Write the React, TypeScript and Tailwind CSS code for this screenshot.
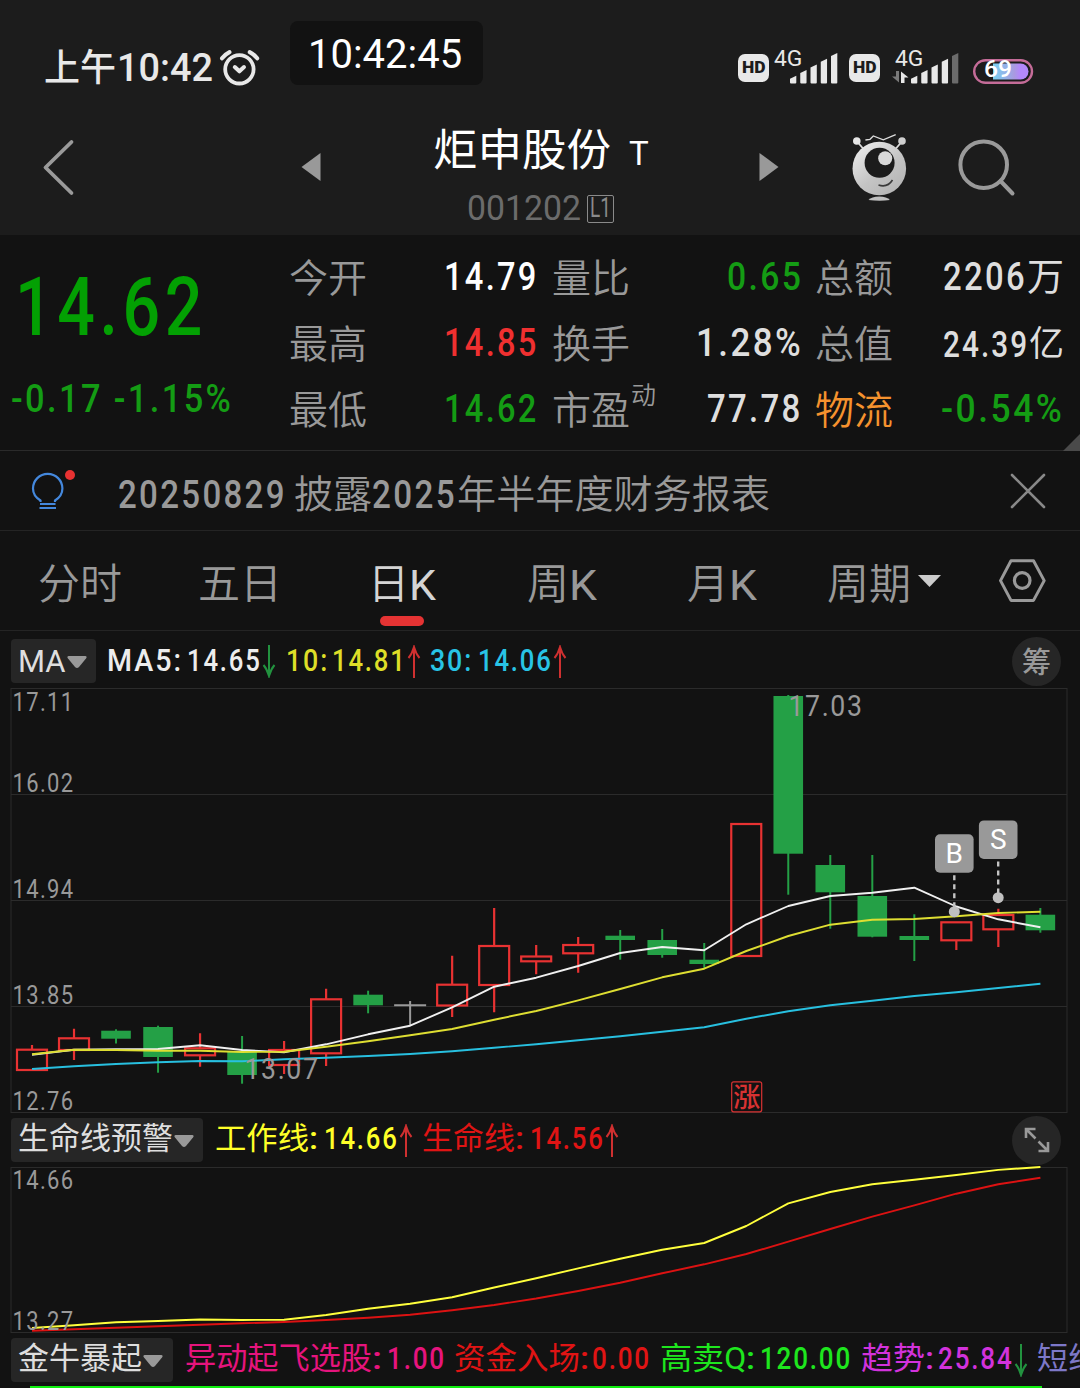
import React, { useLayoutEffect, useRef } from "react";
import clsx from "clsx";

type Candle = {
  kind: "up" | "down" | "flat";
  top: number;
  bottom: number;
  high: number;
  low: number;
};

const STEP = 42.015;
const xAt = (i: number) => 32 + STEP * i;

const candles: Candle[] = [
  { kind: "up", top: 1049.7, bottom: 1070, high: 1045, low: 1070 },
  { kind: "up", top: 1038.3, bottom: 1050, high: 1028.7, low: 1060 },
  { kind: "down", top: 1030.7, bottom: 1038.7, high: 1029.3, low: 1043.5 },
  { kind: "down", top: 1027, bottom: 1057, high: 1025.7, low: 1072.7 },
  { kind: "up", top: 1048.3, bottom: 1055.3, high: 1033.3, low: 1066.7 },
  { kind: "down", top: 1052, bottom: 1075, high: 1036, low: 1083.7 },
  { kind: "up", top: 1050, bottom: 1065, high: 1041, low: 1074 },
  { kind: "up", top: 999.3, bottom: 1053.3, high: 988.7, low: 1066 },
  { kind: "down", top: 994.7, bottom: 1005.3, high: 990.7, low: 1013.3 },
  { kind: "flat", top: 1005.3, bottom: 1005.3, high: 1001, low: 1025 },
  { kind: "up", top: 984.7, bottom: 1005.5, high: 955.7, low: 1017 },
  { kind: "up", top: 946, bottom: 985, high: 908, low: 1012.3 },
  { kind: "up", top: 956.5, bottom: 961.3, high: 945, low: 974.3 },
  { kind: "up", top: 945, bottom: 953.3, high: 937, low: 972.7 },
  { kind: "down", top: 935.7, bottom: 940, high: 930, low: 959.7 },
  { kind: "down", top: 940, bottom: 955, high: 929, low: 957.7 },
  { kind: "down", top: 959.7, bottom: 964, high: 943, low: 968 },
  { kind: "up", top: 824, bottom: 956, high: 824, low: 956 },
  { kind: "down", top: 696, bottom: 853.7, high: 695, low: 894.7 },
  { kind: "down", top: 865, bottom: 892.3, high: 855, low: 928.7 },
  { kind: "down", top: 896, bottom: 936.7, high: 855, low: 937.3 },
  { kind: "down", top: 936, bottom: 940, high: 914.3, low: 961 },
  { kind: "up", top: 922.3, bottom: 940.3, high: 922.3, low: 950 },
  { kind: "up", top: 915, bottom: 929.3, high: 908.7, low: 947 },
  { kind: "down", top: 914.7, bottom: 930.3, high: 908, low: 932.7 },
];

const ma5 = [
  1054.7, 1049.7, 1049.3, 1049, 1045.3, 1050, 1052.3, 1044.3, 1034.3, 1025.7,
  1007.3, 986.7, 977.7, 966, 953, 947, 950.3, 924.3, 906, 896, 892.7, 887.7,
  906.5, 919.3, 927.3,
];
const ma10 = [
  1054.3, 1049.7, 1050, 1050.7, 1050.7, 1052, 1051.7, 1046.7, 1041.3, 1035.3,
  1029, 1019.7, 1011, 1000.3, 989, 977.3, 968.7, 951, 936, 924.7, 919.7, 919,
  916.3, 913, 911.7,
];
const ma30 = [
  1069, 1066.3, 1064, 1062.3, 1061, 1061.3, 1059.3, 1057.7, 1056, 1054, 1051.3,
  1047.7, 1044.3, 1040.3, 1036.3, 1031.7, 1027.3, 1018.7, 1011.3, 1005.3,
  1000.7, 996, 992.3, 988, 983.7,
];
const workLine = [
  1328, 1325.3, 1322.3, 1321, 1319.5, 1320, 1319.7, 1315, 1308.7, 1303.7,
  1297.3, 1287.5, 1278.3, 1268.3, 1258.7, 1249.7, 1243, 1226, 1203.3, 1192,
  1184.3, 1179.7, 1175, 1169.9, 1167,
];
const lifeLine = [
  1330.7, 1329.3, 1327.7, 1326.3, 1324.7, 1323.3, 1322, 1320, 1317.7, 1314.7,
  1310.3, 1305, 1298.5, 1291, 1282.7, 1273.3, 1264.3, 1254, 1241.7, 1229,
  1216.7, 1205.3, 1193.7, 1184.3, 1177.7,
];

const toPoints = (ys: number[]) =>
  ys.map((y, i) => `${xAt(i).toFixed(1)},${y}`).join(" ");

// Squeezes its text horizontally to the width of the box
const Fit = ({
  className,
  children,
}: {
  className?: string;
  children: React.ReactNode;
}) => {
  const outer = useRef<HTMLSpanElement>(null);
  const inner = useRef<HTMLSpanElement>(null);

  useLayoutEffect(() => {
    if (!outer.current || !inner.current) return;
    const scale = outer.current.clientWidth / inner.current.offsetWidth;
    inner.current.style.transform = `scaleX(${scale})`;
  }, [children]);

  return (
    <span ref={outer} className={clsx("block shrink-0 leading-none", className)}>
      <span ref={inner} className="inline-block origin-left whitespace-nowrap">
        {children}
      </span>
    </span>
  );
};

// Narrow, widely set digits used for all prices
const Num = ({ className, children }: { className?: string; children: React.ReactNode }) => (
  <Fit className={clsx("tracking-[0.07em]", className)}>{children}</Fit>
);

const HdBadge = ({ className }: { className?: string }) => (
  <span
    className={clsx(
      "mt-[54px] flex h-7 w-[31px] shrink-0 items-center justify-center rounded-[7px] bg-[#e8e8e8] text-[16px] font-black text-[#1c1c1c]",
      className
    )}
  >
    <Fit className="w-[24px]">HD</Fit>
  </span>
);

const SignalBars = ({ dim }: { dim?: boolean }) => (
  <svg viewBox="0 0 48 34" className="h-[34px] w-12">
    {[0, 1, 2, 3, 4].map((i) => {
      const x = i * 10.25;
      const top = 25.8 - i * 5.7;
      return (
        <path
          key={i}
          d={`M${x} ${top + 3}L${x + 6.3} ${top}V32.5q0 1 -1 1H${x + 1}q-1 0 -1 -1Z`}
          fill={dim && i === 4 ? "#6b6b6b" : "#e8e8e8"}
        />
      );
    })}
  </svg>
);

const StatusBar = () => (
  <div className="flex h-[105px] items-start text-[#e8e8e8]">
    <Fit className="mt-[50px] ml-[44px] w-[72px] text-[37px] font-medium">上午</Fit>
    <Fit className="mt-[49px] ml-[1px] w-[96px] text-[39px] font-medium">10:42</Fit>
    <svg
      viewBox="219 48 41 40"
      className="mt-12 ml-[6px] h-10 w-[41px]"
      fill="none"
      stroke="#e8e8e8"
      strokeLinecap="round"
      strokeLinejoin="round"
    >
      <circle cx="239.4" cy="69.3" r="14.2" strokeWidth="3.8" />
      <path d="M234.8 67l4.6 4.3 4.6-4.3" strokeWidth="4" />
      <path d="M222 58.3q3-4 7.5-6.2M249.7 52.1q4.5 2.2 7.5 6.2" strokeWidth="4" />
    </svg>
    <div className="mt-[21px] ml-[30px] flex h-16 w-[193px] items-center justify-center rounded-lg bg-[#121212] pt-0.5 pr-1 text-[41px] text-white">
      <Fit className="w-[154px]">10:42:45</Fit>
    </div>
    <HdBadge className="ml-[255px]" />
    <div className="mt-[48px] ml-[5px] h-[37px] w-[64px]">
      <Fit className="w-[28px] text-[22px]">4G</Fit>
      <div className="-mt-[20px] ml-[15.5px]">
        <SignalBars />
      </div>
    </div>
    <HdBadge className="ml-[11px]" />
    <div className="mt-[48px] ml-[12px] h-[37px] w-[68px]">
      <Fit className="ml-[3px] w-[28px] text-[22px]">4G</Fit>
      <div className="-mt-[20px] flex w-[68px] items-end">
        <svg viewBox="891 72 17 12" className="mb-[1px] h-3 w-[17px] shrink-0">
          <path d="M898 72V83.5L891 77.500H895V72Z" fill="#7a7a7a" />
          <path d="M900 84V72.500L907.500 78.500H903.500V84Z" fill="#e8e8e8" />
        </svg>
        <div className="ml-[2px] w-12 shrink-0">
          <SignalBars dim />
        </div>
      </div>
    </div>
    <svg
      viewBox="972 58 62 27"
      className="mt-[58px] ml-[12px] h-[27px] w-[62px] shrink-0 overflow-visible"
    >
      <defs>
        <linearGradient id="charge" x1="0" x2="1" y1="0" y2="0">
          <stop offset="0" stopColor="#78d2f2" />
          <stop offset="0.6" stopColor="#a99ae0" />
          <stop offset="0.75" stopColor="#b388fa" />
          <stop offset="1" stopColor="#b388fa" />
        </linearGradient>
      </defs>
      <rect x="974.2" y="60.2" width="57.8" height="22.6" rx="11.3" fill="none" stroke="#c46c98" strokeWidth="2.4" />
      <path d="M993 63.500H1020.500a8 8 0 0 1 0 16H993Z" fill="url(#charge)" />
      <text x="984" y="77" textLength="28" lengthAdjust="spacingAndGlyphs" fontSize="24" fontWeight="500" fill="#fff">
        69
      </text>
    </svg>
  </div>
);

const TitleBar = () => (
  <div className="flex h-[130px] items-start">
    <svg
      viewBox="42 139 34 58"
      className="mt-[34px] ml-[42px] h-[58px] w-[34px]"
      fill="none"
      stroke="#9a9a9a"
      strokeWidth="3.8"
      strokeLinecap="round"
      strokeLinejoin="round"
    >
      <path d="M71.500 142L45.500 167.500L71.500 193" />
    </svg>
    <svg viewBox="0 0 20 28" className="mt-[48px] ml-[225px] h-7 w-5" fill="#999">
      <path d="M.5 14L19.500 0V28Z" />
    </svg>
    <div className="ml-[112px] w-[216px]">
      <div className="mt-[24px] flex items-center text-white">
        <Fit className="w-[178px] text-[44px]">炬申股份</Fit>
        <Fit className="mt-[5px] ml-[18px] w-[20px] text-[33px]">T</Fit>
      </div>
      <div className="mt-[18px] ml-[34px] flex items-center text-[#6b6b6b]">
        <Fit className="w-[114px] text-[35px]">001202</Fit>
        <span className="ml-[6px] flex h-7 w-[27px] items-center justify-center rounded-[2px] border border-[#8a8a8a] text-[27px] text-[#8a8a8a]">
          <Fit className="w-[21px]">L1</Fit>
        </span>
      </div>
    </div>
    <svg viewBox="0 0 20 28" className="mt-[48px] ml-[110px] h-7 w-5" fill="#999">
      <path d="M19.500 14L.5 0V28Z" />
    </svg>
    <svg viewBox="850 132 60 72" className="mt-[27px] ml-[71px] h-[72px] w-[60px]">
      <defs>
        <linearGradient id="robot" x1="0" x2="0.8" y1="0" y2="1">
          <stop offset="0" stopColor="#f2f2f2" />
          <stop offset="0.6" stopColor="#c4c4c4" />
          <stop offset="1" stopColor="#b4b4b4" />
        </linearGradient>
      </defs>
      <g stroke="#dcdcdc" fill="none" strokeWidth="1.8">
        <path d="M857.500 142L863.500 149M901.500 142L895.500 149" />
        <path d="M865.400 140L870 139.300L873.300 136L883.300 139.900L895.700 134.700" strokeWidth="1.3" />
      </g>
      <circle cx="856.8" cy="141" r="3.8" fill="#e6e6e6" />
      <circle cx="902" cy="141" r="3.8" fill="#cfcfcf" />
      <circle cx="879.3" cy="168.5" r="26.8" fill="url(#robot)" />
      <circle cx="879.6" cy="162.8" r="15" fill="#1c1c1c" />
      <circle cx="885.2" cy="158.3" r="7" fill="#d8d8d8" />
      <path d="M878.500 185q9 3 14-5" fill="none" stroke="#3a3a3a" strokeWidth="1.6" />
      <path d="M868.500 200q3-3.600 10.700-3.600t10.700 3.600q-10 1.600-21.400 0" fill="#c0c0c0" />
    </svg>
    <svg
      viewBox="956 137 60 60"
      className="mt-8 ml-[46px] h-[60px] w-[60px]"
      fill="none"
      stroke="#9a9a9a"
      strokeWidth="4"
      strokeLinecap="round"
    >
      <circle cx="983.7" cy="164.7" r="23.3" />
      <path d="M1000.500 181L1012.500 193.500" />
    </svg>
  </div>
);

const quoteLabel = "flex h-[66px] items-center text-[39px] font-[350] text-[#999]";
const quoteValue = "flex h-[66px] items-center justify-end pb-1 text-[39.5px] font-medium";

const Quote = () => (
  <div className="relative flex h-[216px] border-b border-[#2a2a2a]">
    <div className="w-[289px] shrink-0 font-medium">
      <Num className="mt-[32px] ml-[15px] w-[192px] text-[81px] text-[#03a003]">14.62</Num>
      <Num className="mt-[32px] ml-[11px] w-[222px] text-[39px] text-[#149c14]">
        -0.17 -1.15%
      </Num>
    </div>
    <div className="mt-[11px] w-[78px] shrink-0">
      <div className={quoteLabel}>今开</div>
      <div className={quoteLabel}>最高</div>
      <div className={quoteLabel}>最低</div>
    </div>
    <div className="mt-[11px] w-[172px] shrink-0">
      <div className={clsx(quoteValue, "text-white")}>
        <Num className="w-[95px]">14.79</Num>
      </div>
      <div className={clsx(quoteValue, "text-[#f03030]")}>
        <Num className="w-[95px]">14.85</Num>
      </div>
      <div className={clsx(quoteValue, "text-[#149c14]")}>
        <Num className="w-[95px]">14.62</Num>
      </div>
    </div>
    <div className="mt-[11px] ml-[13px] w-[105px] shrink-0">
      <div className={quoteLabel}>量比</div>
      <div className={quoteLabel}>换手</div>
      <div className={quoteLabel}>
        市盈
        <span className="mb-[30px] ml-px text-[25px]">动</span>
      </div>
    </div>
    <div className="mt-[11px] w-[146px] shrink-0">
      <div className={clsx(quoteValue, "text-[#149c14]")}>
        <Num className="w-[76px]">0.65</Num>
      </div>
      <div className={clsx(quoteValue, "text-[#dedede]")}>
        <Num className="w-[107px]">1.28%</Num>
      </div>
      <div className={clsx(quoteValue, "text-[#dedede]")}>
        <Num className="w-[96px]">77.78</Num>
      </div>
    </div>
    <div className="mt-[11px] ml-[12px] w-[78px] shrink-0">
      <div className={quoteLabel}>总额</div>
      <div className={quoteLabel}>总值</div>
      <div className="flex h-[66px] items-center text-[39px] font-[350] text-[#f5922e]">物流</div>
    </div>
    <div className="mt-[11px] w-[171px] shrink-0">
      <div className={clsx(quoteValue, "text-[#dedede]")}>
        <Num className="w-[84px]">2206</Num>
        <Fit className="w-[37px] text-[38px] font-normal">万</Fit>
      </div>
      <div className="flex h-[66px] items-center justify-end pb-0.5 text-[37px] font-medium text-[#dedede]">
        <Num className="w-[86px]">24.39</Num>
        <Fit className="w-[35px] text-[35px] font-normal">亿</Fit>
      </div>
      <div className={clsx(quoteValue, "text-[#149c14]")}>
        <Num className="w-[123px]">-0.54%</Num>
      </div>
    </div>
    <svg viewBox="0 0 17 17" className="absolute right-0 -bottom-px h-[17px] w-[17px]" fill="#4a4a4a">
      <path d="M17 0V17H0Z" />
    </svg>
  </div>
);

const News = () => (
  <div className="flex h-20 items-center border-b border-[#242424] text-[#999]">
    <svg
      viewBox="30 468 48 44"
      className="mb-0.5 ml-[30px] h-11 w-12"
      fill="none"
      stroke="#4488dd"
      strokeWidth="2.2"
    >
      <path d="M40.500 502V500.500Q33 496 33 488.500A14.700 14.700 0 0 1 62.400 488.500Q62.400 496 55 500.500V502M39.500 508H56M40 504H55.500" />
      <circle cx="70" cy="475" r="5" fill="#e83232" stroke="none" />
    </svg>
    <div className="mt-2 ml-[40px] flex items-center text-[39px]">
      <Num className="w-[169px] text-[39.5px] font-medium">20250829</Num>
      <Fit className="mt-0.5 ml-[7px] w-[78px] font-[350]">披露</Fit>
      <Num className="w-[85px] text-[39.5px] font-medium">2025</Num>
      <Fit className="mt-0.5 w-[313px] font-[350]">年半年度财务报表</Fit>
    </div>
    <svg
      viewBox="0 0 36 36"
      className="ml-[240px] h-9 w-9"
      stroke="#888"
      strokeWidth="2.6"
      strokeLinecap="round"
    >
      <path d="M2 2L34 34M34 2L2 34" />
    </svg>
  </div>
);

const Tabs = () => (
  <div className="flex h-[100px] items-start border-b border-[#242424] pt-[33px] text-[42px] font-[350] text-[#999]">
    <Fit className="ml-[38px] w-[84px]">分时</Fit>
    <Fit className="ml-[76px] w-[84px]">五日</Fit>
    <div className="ml-[86px] w-[72px] text-[#d4d4d4]">
      <div className="flex">
        <Fit className="w-[41px]">日</Fit>
        <Fit className="w-[27px] text-[43px] font-normal">K</Fit>
      </div>
      <div className="mt-[9px] ml-[12px] h-[10px] w-[44px] rounded-full bg-[#e53333]" />
    </div>
    <div className="ml-[87px] flex w-[71px]">
      <Fit className="w-[42px]">周</Fit>
      <Fit className="w-[28px] text-[43px] font-normal">K</Fit>
    </div>
    <div className="ml-[89px] flex w-[71px]">
      <Fit className="w-[42px]">月</Fit>
      <Fit className="w-[28px] text-[43px] font-normal">K</Fit>
    </div>
    <Fit className="ml-[69px] w-[84px]">周期</Fit>
    <svg viewBox="0 0 23 12" className="mt-[11px] ml-[7px] h-3 w-[23px]" fill="#ccc">
      <path d="M0 0H23L11.500 12Z" />
    </svg>
    <svg
      viewBox="998 557 50 48"
      className="-mt-[7px] ml-[57px] h-12 w-[50px]"
      fill="none"
      stroke="#999"
      strokeWidth="3"
      strokeLinejoin="round"
    >
      <path d="M1011 560.800H1033.500L1044.200 580.600L1033.500 600.400H1011L1000.500 580.600Z" />
      <circle cx="1022.2" cy="580.5" r="7.8" strokeWidth="3.2" />
    </svg>
  </div>
);

const Picker = ({ className, children }: { className?: string; children: React.ReactNode }) => (
  <div
    className={clsx(
      "flex h-11 shrink-0 items-center rounded bg-[#262626] pl-[7px] text-[31px] text-[#dedede]",
      className
    )}
  >
    {children}
    <svg viewBox="0 0 20 12" className="mt-0.5 ml-[1px] h-3 w-5" fill="#999">
      <path d="M1.500 0H18.500Q20.500 0.500 19 2.500L12 11Q10 12.800 8 11L1 2.500Q-.5 .5 1.500 0Z" />
    </svg>
  </div>
);

const Trend = ({ down }: { down?: boolean }) => (
  <svg
    viewBox="0 0 14 33"
    className={clsx("h-[33px] w-[14px] shrink-0", down && "rotate-180")}
    fill="none"
    stroke={down ? "#22923f" : "#cf3030"}
    strokeWidth="2"
  >
    <path d="M7 33V2M1.500 13Q5 9 7 2Q9 9 12.500 13" />
  </svg>
);

const RoundButton = ({ children }: { children: React.ReactNode }) => (
  <div className="mr-[19px] ml-auto flex size-[49px] items-center justify-center rounded-full bg-[#262626] text-[29px] leading-none text-[#999]">
    {children}
  </div>
);

const MaBar = () => (
  <div className="flex h-[57px] items-center pt-[3px] text-[30.5px] font-medium">
    <Picker className="ml-[11px] w-[85px]">
      <Fit className="w-[48px] text-[31px] font-normal">MA</Fit>
    </Picker>
    <Num className="ml-[11px] w-[76px] text-[#ededed]">MA5:</Num>
    <Num className="ml-[4px] w-[75px] text-[#ededed]">14.65</Num>
    <Trend down />
    <Num className="ml-[10px] w-[43px] text-[#dede28]">10:</Num>
    <Num className="ml-[3px] w-[75px] text-[#dede28]">14.81</Num>
    <Trend />
    <Num className="ml-[9px] w-[43px] text-[#28c4e6]">30:</Num>
    <Num className="ml-[5px] w-[75px] text-[#28c4e6]">14.06</Num>
    <Trend />
    <RoundButton>
      <span className="mt-1">筹</span>
    </RoundButton>
  </div>
);

const LifeBar = () => (
  <div className="flex h-[54px] items-center text-[30.5px] font-medium">
    <Picker className="ml-[11px] w-[192px]">
      <Fit className="mb-1 w-[155px] font-normal">生命线预警</Fit>
    </Picker>
    <Fit className="mb-1 ml-[12px] w-[94px] text-[31px] font-normal text-[#ffff28]">工作线</Fit>
    <Fit className="mb-0.5 w-[9px] text-[#ffff28]">:</Fit>
    <Num className="mb-0.5 ml-[6px] w-[75px] text-[#ffff28]">14.66</Num>
    <Trend />
    <Fit className="mb-1 ml-[9px] w-[93px] text-[31px] font-normal text-[#e01414]">生命线</Fit>
    <Fit className="mb-0.5 w-[9px] text-[#e01414]">:</Fit>
    <Num className="mb-0.5 ml-[6px] w-[75px] text-[#e01414]">14.56</Num>
    <Trend />
    <RoundButton>
      <svg
        viewBox="0 0 26 26"
        className="h-[26px] w-[26px]"
        fill="none"
        stroke="#999"
        strokeWidth="2.6"
      >
        <path d="M2 11V2H11.500M2.500 2.500L11.500 11.500M24 15V24H14.500M23.500 23.500L14.500 14.500" />
      </svg>
    </RoundButton>
  </div>
);

const BullBar = () => (
  <div className="flex h-[52px] w-[1080px] items-center overflow-hidden text-[30.5px] font-medium">
    <Picker className="ml-[11px] w-[162px]">
      <Fit className="mb-1 w-[124px] font-normal">金牛暴起</Fit>
    </Picker>
    <Fit className="mb-1 ml-[12px] w-[187px] text-[31px] font-normal text-[#e6147d]">异动起飞选股</Fit>
    <Fit className="mb-0.5 w-[10px] text-[#e6147d]">:</Fit>
    <Num className="mb-0.5 ml-[5px] w-[59px] text-[#e6147d]">1.00</Num>
    <Fit className="mb-1 ml-[8px] w-[126px] text-[31px] font-normal text-[#e01414]">资金入场</Fit>
    <Fit className="mb-0.5 w-[9px] text-[#e01414]">:</Fit>
    <Num className="mb-0.5 ml-[3px] w-[59px] text-[#e01414]">0.00</Num>
    <Fit className="mb-1 ml-[9px] w-[86px] text-[31px] font-normal text-[#1ee61e]">高卖Q</Fit>
    <Fit className="mb-0.5 w-[9px] text-[#1ee61e]">:</Fit>
    <Num className="mb-0.5 ml-[5px] w-[92px] text-[#1ee61e]">120.00</Num>
    <Fit className="mb-1 ml-[9px] w-[64px] text-[31px] font-normal text-[#d232dc]">趋势</Fit>
    <Fit className="mb-0.5 w-[9px] text-[#d232dc]">:</Fit>
    <Num className="mb-0.5 ml-[4px] w-[76px] text-[#d232dc]">25.84</Num>
    <Trend down />
    <Fit className="mb-1 ml-[9px] w-[62px] text-[31px] font-normal text-[#7d78c8]">短线</Fit>
  </div>
);

const AxisLabel = ({ y, children }: { y: number; children: string }) => (
  <text
    x="12.5"
    y={y}
    fontSize="26"
    fill="#999"
    letterSpacing="1.6"
    textLength="62"
    lengthAdjust="spacingAndGlyphs"
  >
    {children}
  </text>
);

const CandleShape = ({ candle, x }: { candle: Candle; x: number }) => {
  const { kind, top, bottom, high, low } = candle;
  if (kind === "flat") {
    return <path d={`M${x - 16} ${top}H${x + 16}M${x} ${high}V${low}`} stroke="#999" strokeWidth="2" />;
  }
  if (kind === "down") {
    return (
      <g>
        <path d={`M${x} ${high}V${low}`} stroke="#24a046" strokeWidth="2" />
        <rect x={x - 14.8} y={top} width="29.6" height={bottom - top} fill="#24a046" />
      </g>
    );
  }
  return (
    <g stroke="#e83232" strokeWidth="2.2" fill="none">
      <rect x={x - 15} y={top} width="30" height={bottom - top} />
      <path d={`M${x} ${high}V${top}M${x} ${bottom}V${low}`} />
    </g>
  );
};

const Marker = ({ x, boxY, dotY, label }: { x: number; boxY: number; dotY: number; label: string }) => (
  <g>
    <path d={`M${x} ${boxY + 41}V${dotY}`} stroke="#c4c4c4" strokeWidth="2.4" strokeDasharray="5 4" />
    <circle cx={x} cy={dotY} r="5.5" fill="#c0c0c0" />
    <rect x={x - 19.3} y={boxY} width="38.6" height="38.6" rx="5" fill="#999" />
    <text x={x} y={boxY + 28.7} textAnchor="middle" fontSize="28" fill="#fff">
      {label}
    </text>
  </g>
);

const KChart = () => (
  <svg viewBox="0 688 1080 425" className="block h-[425px] w-full overflow-visible">
    <g fill="none" stroke="#2b2b2b" strokeWidth="1">
      <rect x="11" y="688.5" width="1056" height="424" />
      <path d="M11 794.500H1067M11 900.500H1067M11 1006.500H1067" />
    </g>
    {candles.map((candle, i) => (
      <CandleShape key={i} candle={candle} x={xAt(i)} />
    ))}
    <g fill="none" strokeWidth="1.9" strokeLinejoin="round">
      <polyline points={toPoints(ma5)} stroke="#f0f0f0" />
      <polyline points={toPoints(ma10)} stroke="#dede32" />
      <polyline points={toPoints(ma30)} stroke="#28c0e0" />
    </g>
    <AxisLabel y={711}>17.11</AxisLabel>
    <AxisLabel y={792}>16.02</AxisLabel>
    <AxisLabel y={898}>14.94</AxisLabel>
    <AxisLabel y={1004}>13.85</AxisLabel>
    <AxisLabel y={1110}>12.76</AxisLabel>
    <g fontSize="30" fill="#999" letterSpacing="1.8">
      <text x="788.5" y="715.7" textLength="75" lengthAdjust="spacingAndGlyphs">
        17.03
      </text>
      <text x="244.5" y="1079" textLength="75" lengthAdjust="spacingAndGlyphs">
        13.07
      </text>
    </g>
    <Marker x={954.3} boxY={834.2} dotY={911.7} label="B" />
    <Marker x={998.2} boxY={820.4} dotY={897.7} label="S" />
    <rect x="731.7" y="1081.8" width="30" height="30" rx="2" fill="none" stroke="#d83232" strokeWidth="1.2" />
    <text x="746.7" y="1106.5" textAnchor="middle" fontSize="27" fontWeight="500" fill="#d83232">
      涨
    </text>
  </svg>
);

const LifeChart = () => (
  <svg viewBox="0 1166 1080 168" className="block h-[168px] w-full overflow-visible">
    <rect x="11" y="1167.5" width="1056" height="165" fill="none" stroke="#2b2b2b" />
    <g fill="none" strokeWidth="1.9" strokeLinejoin="round">
      <polyline points={toPoints(workLine)} stroke="#ffff3c" />
      <polyline points={toPoints(lifeLine)} stroke="#dc1212" />
    </g>
    <AxisLabel y={1189}>14.66</AxisLabel>
    <AxisLabel y={1330}>13.27</AxisLabel>
  </svg>
);

export default function App() {
  return (
    <div className="h-[1388px] w-[1080px] overflow-hidden bg-[#121212] font-[Roboto,'Noto_Sans_CJK_SC',sans-serif]">
      <header className="h-[235px] bg-[#1c1c1c]">
        <StatusBar />
        <TitleBar />
      </header>
      <Quote />
      <News />
      <Tabs />
      <MaBar />
      <KChart />
      <LifeBar />
      <div className="-mt-px">
        <LifeChart />
      </div>
      <BullBar />
      <div className="ml-[30px] h-[2px] w-[1012px] bg-[#10f010]" />
    </div>
  );
}
